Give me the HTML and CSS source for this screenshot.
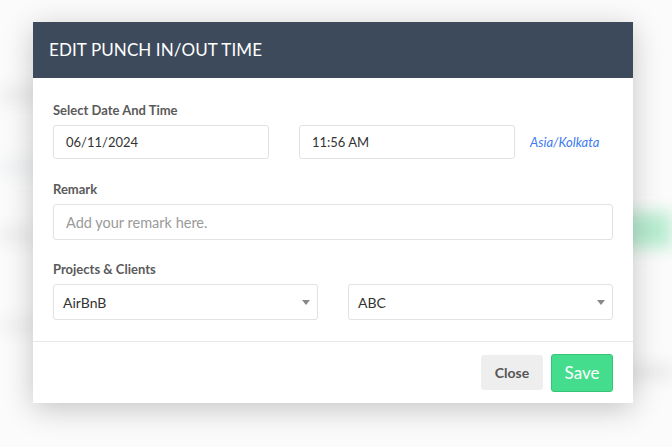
FILE: index.html
```html
<!DOCTYPE html>
<html lang="en">
<head>
  <meta charset="UTF-8">
  <title>Edit Punch In/Out Time</title>
  <link rel="stylesheet" href="styles.css">
</head>
<body>

<div class="backdrop">
  <div class="bg-row bg-row-1"></div>
  <div class="bg-row bg-row-2"></div>
  <div class="bg-row bg-row-3"></div>
  <div class="bg-green"></div>
  <div class="bg-row bg-row-4"></div>
  <div class="bg-row bg-row-5"></div>
</div>

<div class="modal">
  <div class="modal-header">EDIT PUNCH IN/OUT TIME</div>

  <div class="modal-body">
    <label class="field-label">Select Date And Time</label>
    <div class="date-row">
      <div class="input">06/11/2024</div>
      <div class="input">11:56 AM</div>
      <span class="timezone">Asia/Kolkata</span>
    </div>

    <label class="field-label">Remark</label>
    <div class="input input-tall placeholder">Add your remark here.</div>

    <label class="field-label">Projects &amp; Clients</label>
    <div class="select-row">
      <div class="input input-tall select">AirBnB <span class="caret"></span></div>
      <div class="input input-tall select">ABC <span class="caret"></span></div>
    </div>
  </div>

  <div class="modal-footer">
    <button class="btn btn-close">Close</button>
    <button class="btn btn-save">Save</button>
  </div>
</div>

</body>
</html>
```

FILE: styles.css
```css
body {
  margin: 0;
  width: 672px;
  height: 447px;
  overflow: hidden;
  background: #fbfbfb;
  font-family: 'Lato', 'Open Sans', sans-serif;
  position: relative;
}

/* blurred page behind the dialog */
.backdrop {
  position: absolute;
  inset: 0;
  filter: blur(8px);
}

.bg-row {
  position: absolute;
  left: 0;
  right: 0;
  height: 14px;
  background: #ececec;
}

.bg-row-1 { top: 88px; width: 60px; }
.bg-row-2 { top: 160px; width: 50px; background: #edf1f3; }
.bg-row-3 { top: 228px; width: 40px; }
.bg-row-4 { top: 318px; width: 50px; background: #f0f0f0; }
.bg-row-5 { top: 365px; left: 610px; background: #e8e8e8; }

.bg-green {
  position: absolute;
  top: 212px;
  left: 600px;
  right: 0;
  height: 36px;
  background: #b8ecd0;
}

.modal {
  position: absolute;
  left: 33px;
  top: 22px;
  width: 600px;
  background: #fff;
  box-shadow: 0 6px 28px rgba(0, 0, 0, 0.22);
}

.modal-header {
  height: 56px;
  background: #3d4a5c;
  color: #fff;
  font-size: 17px;
  line-height: 56px;
  padding-left: 16px;
  letter-spacing: 0.1px;
}

.modal-body {
  padding: 24px 20px 21px;
}

.field-label {
  display: block;
  font-size: 13px;
  font-weight: bold;
  color: #5a5a5a;
  line-height: 16px;
  margin-bottom: 7px;
}

.input {
  box-sizing: border-box;
  height: 36px;
  border: 1px solid #e2e2e2;
  border-radius: 3px;
  padding: 0 12px;
  font-size: 13px;
  color: #333;
  display: flex;
  align-items: center;
}

.date-row {
  display: flex;
  align-items: center;
  margin-bottom: 22px;
}

.date-row .input {
  height: 34px;
  width: 216px;
}

.date-row .input + .input {
  margin-left: 30px;
  width: 216px;
}

.timezone {
  margin-left: 15px;
  font-size: 13px;
  font-style: italic;
  color: #3d7bf2;
}

.input-tall {
  height: 36px;
  font-size: 14px;
}

.placeholder {
  color: #9a9a9a;
  font-size: 14.5px;
  margin-bottom: 21px;
}

.select-row {
  display: grid;
  grid-template-columns: 1fr 1fr;
  gap: 30px;
}

.select {
  justify-content: space-between;
  padding-left: 9px;
  padding-right: 7px;
}

.caret {
  width: 0;
  height: 0;
  border-left: 4px solid transparent;
  border-right: 4px solid transparent;
  border-top: 5px solid #888;
}

.modal-footer {
  border-top: 1px solid #e8e8e8;
  height: 61px;
  padding: 0 20px;
  display: flex;
  justify-content: flex-end;
  align-items: center;
  gap: 8px;
}

.btn {
  font-family: 'Lato', 'Open Sans', sans-serif;
  border-radius: 3px;
  cursor: pointer;
  width: 62px;
}

.btn-close {
  height: 35px;
  background: #eeeeee;
  border: none;
  color: #555;
  font-size: 14px;
  font-weight: bold;
}

.btn-save {
  height: 38px;
  background: #44dd8d;
  border: 1px solid #34c57a;
  color: #fff;
  font-size: 17px;
}
```
